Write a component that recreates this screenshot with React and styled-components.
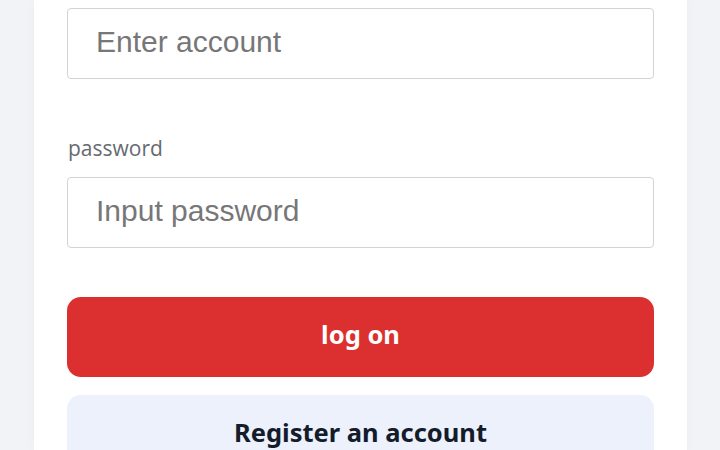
import React from "react";
import styled, { createGlobalStyle } from "styled-components";

const GlobalStyle = createGlobalStyle`
  html, body {
    margin: 0;
    padding: 0;
    background: #f2f3f6;
    overflow: hidden;
  }
`;

const Page = styled.div`
  display: flex;
  justify-content: center;
  height: 450px;
  overflow: hidden;
  padding: 0 33px 0 34px;
`;

const Card = styled.section`
  flex: 1;
  background: #fff;
  box-shadow: 0 0 12px rgba(0, 0, 0, 0.03);
  padding: 8px 33px 0 33px;
  display: flex;
  flex-direction: column;

  & > * {
    flex-shrink: 0;
  }
`;

const Input = styled.input`
  box-sizing: border-box;
  width: 100%;
  height: 71px;
  border: 1.5px solid #d3d3d3;
  border-radius: 4px;
  padding: 0 28px 3px;
  font-family: "Liberation Sans", Arial, sans-serif;
  font-size: 30px;
  color: #333;
  outline: none;
  background: #fff;

  &::placeholder {
    color: #777;
  }
`;

const Label = styled.label`
  display: block;
  margin: 56px 0 16px 1px;
  font-family: "Open Sans", "Noto Sans", sans-serif;
  font-size: 21px;
  line-height: 26px;
  color: #666a70;
`;

const Button = styled.button`
  box-sizing: border-box;
  width: 100%;
  height: 80px;
  border: none;
  border-radius: 14px;
  padding: 0 0 6px;
  margin-top: ${(p) => p.$gap}px;
  background: ${(p) => (p.$primary ? "#dc2f2f" : "#ecf1fb")};
  color: ${(p) => (p.$primary ? "#fff" : "#141c2c")};
  font-family: "Noto Sans", "Open Sans", sans-serif;
  font-weight: 700;
  font-size: 25.5px;
  cursor: pointer;
`;

export default function App() {
  return (
    <>
      <GlobalStyle />
      <Page>
        <Card>
          <Input placeholder="Enter account" />
          <Label>password</Label>
          <Input type="password" placeholder="Input password" />
          <Button $primary $gap={49}>log on</Button>
          <Button $gap={18}>Register an account</Button>
        </Card>
      </Page>
    </>
  );
}
